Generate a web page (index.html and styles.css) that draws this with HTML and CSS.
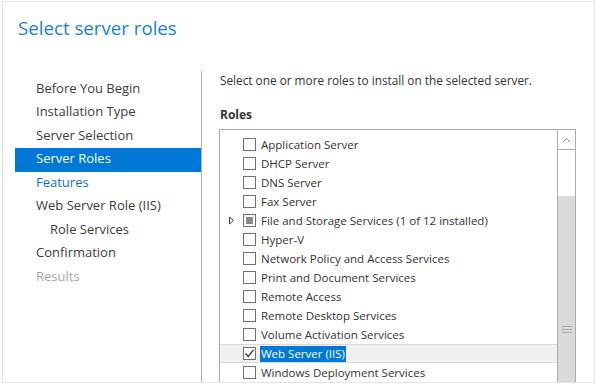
FILE: index.html
```html
<!DOCTYPE html>
<html lang="en">
<head>
  <meta charset="UTF-8" />
  <title>Select server roles</title>
  <link rel="stylesheet" href="styles.css">
</head>
<body>
  <div class="wizard">
    <h1 class="title">Select server roles</h1>

    <div class="main">
      <ul class="steps">
        <li>Before You Begin</li>
        <li>Installation Type</li>
        <li>Server Selection</li>
        <li class="current">Server Roles</li>
        <li class="link">Features</li>
        <li>Web Server Role (IIS)</li>
        <li class="sub">Role Services</li>
        <li>Confirmation</li>
        <li class="disabled">Results</li>
      </ul>

      <div class="content">
        <p class="intro">Select one or more roles to install on the selected server.</p>
        <h2 class="label">Roles</h2>

        <div class="listbox">
          <ul class="roles">
            <li><span class="toggle"></span><span class="check"></span><span class="name">Application Server</span></li>
            <li><span class="toggle"></span><span class="check"></span><span class="name">DHCP Server</span></li>
            <li><span class="toggle"></span><span class="check"></span><span class="name">DNS Server</span></li>
            <li><span class="toggle"></span><span class="check"></span><span class="name">Fax Server</span></li>
            <li>
              <span class="toggle">
                <svg width="7" height="9" viewBox="0 0 7 9"><path d="M1.5 1 L5.5 4.5 L1.5 8 Z" fill="none" stroke="#444" stroke-width="1"/></svg>
              </span>
              <span class="check partial"></span><span class="name">File and Storage Services (1 of 12 installed)</span>
            </li>
            <li><span class="toggle"></span><span class="check"></span><span class="name">Hyper-V</span></li>
            <li><span class="toggle"></span><span class="check"></span><span class="name">Network Policy and Access Services</span></li>
            <li><span class="toggle"></span><span class="check"></span><span class="name">Print and Document Services</span></li>
            <li><span class="toggle"></span><span class="check"></span><span class="name">Remote Access</span></li>
            <li><span class="toggle"></span><span class="check"></span><span class="name">Remote Desktop Services</span></li>
            <li><span class="toggle"></span><span class="check"></span><span class="name">Volume Activation Services</span></li>
            <li class="selected">
              <span class="toggle"></span>
              <span class="check">
                <svg width="11" height="11" viewBox="0 0 11 11"><path d="M1.5 5.5 L4.2 8.5 L9.5 1.8" fill="none" stroke="#333" stroke-width="1.3"/></svg>
              </span>
              <span class="name">Web Server (IIS)</span>
            </li>
            <li><span class="toggle"></span><span class="check"></span><span class="name">Windows Deployment Services</span></li>
          </ul>

          <div class="scrollbar">
            <div class="arrow">
              <svg width="9" height="6" viewBox="0 0 9 6"><path d="M1 5 L4.5 1.5 L8 5" fill="none" stroke="#8c8c8c" stroke-width="1"/></svg>
            </div>
            <div class="track"></div>
            <div class="thumb">
              <span class="grip"></span>
            </div>
          </div>
        </div>
      </div>
    </div>
  </div>
</body>
</html>
```

FILE: styles.css
```css
body {
  margin: 0;
  font-family: 'Open Sans', 'Noto Sans', sans-serif;
  font-size: 12px;
  color: #333;
  background: #fff;
}
.wizard {
  margin: 1px 0 0 2px;
  width: 593px;
  height: 382px;
  box-sizing: border-box;
  border: 1px solid #e3e3e3;
  overflow: hidden;
  display: flex;
  flex-direction: column;
}
.title {
  margin: 0;
  padding: 12px 0 0 15px;
  height: 69px;
  flex: none;
  box-sizing: border-box;
  font-size: 18.7px;
  font-weight: 400;
  color: #1a7fd4;
  line-height: 28px;
}
.main {
  flex: 1;
  display: flex;
  min-height: 0;
}
.steps {
  list-style: none;
  margin: 0;
  padding: 6.5px 0 0 12px;
  width: 186px;
  border-right: 1px solid #b4b4b4;
  font-size: 13px;
}
.steps li {
  height: 23.5px;
  line-height: 21px;
  padding-left: 21px;
  color: #3c3c3c;
}
.steps li.current {
  background: #0078d7;
  color: #fff;
}
.steps li.link {
  color: #0a74cc;
}
.steps li.sub {
  padding-left: 35px;
}
.steps li.disabled {
  color: #a6a6a6;
}
.content {
  flex: 1;
  padding: 0 18px 0 17px;
  min-width: 0;
}
.intro {
  margin: 0;
  padding-left: 1px;
  font-size: 11.8px;
  line-height: 18px;
}
.label {
  margin: 0;
  padding: 17px 0 0 1px;
  font-size: 12px;
  font-weight: 700;
  line-height: 18px;
}
.listbox {
  margin-top: 5px;
  height: 300px;
  border: 1px solid #ababab;
  display: flex;
}
.roles {
  list-style: none;
  margin: 0;
  padding: 5px 0 0;
  flex: 1;
  font-size: 11.5px;
}
.roles li {
  height: 19px;
  display: flex;
  align-items: center;
  box-sizing: border-box;
  white-space: nowrap;
}
.roles li.selected {
  background: #f0f0f0;
  border-top: 1px solid #dadada;
  border-bottom: 1px solid #dadada;
}
.toggle {
  width: 23px;
  display: flex;
  justify-content: center;
}
.check {
  width: 13px;
  height: 13px;
  box-sizing: border-box;
  border: 1px solid #707070;
  background: #fff;
  display: flex;
  align-items: center;
  justify-content: center;
}
.check.partial::before {
  content: "";
  width: 7px;
  height: 7px;
  background: #8a8a8a;
}
.name {
  margin-left: 4px;
  padding: 0 1px;
  line-height: 16px;
}
.selected .name {
  background: #0078d7;
  color: #fff;
}
.scrollbar {
  width: 17px;
  border-left: 1px solid #ababab;
  display: flex;
  flex-direction: column;
}
.arrow {
  height: 19px;
  border-bottom: 1px solid #ababab;
  display: flex;
  align-items: center;
  justify-content: center;
}
.track {
  height: 46px;
}
.thumb {
  flex: 1;
  background: #dadada;
  position: relative;
}
.grip {
  position: absolute;
  left: 4px;
  top: 130px;
  width: 10px;
  height: 1px;
  background: #a8a8a8;
  box-shadow: 0 3px 0 #a8a8a8, 0 6px 0 #a8a8a8;
}
```
